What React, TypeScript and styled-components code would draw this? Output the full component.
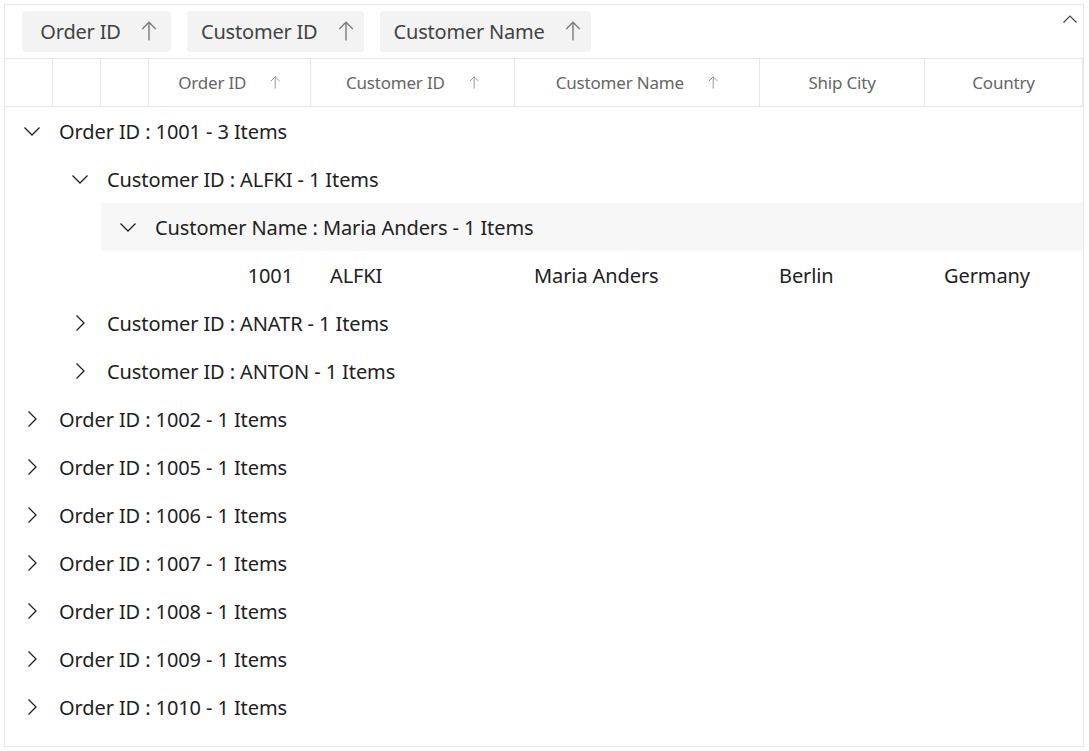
import styled, { createGlobalStyle } from "styled-components";

const GlobalStyle = createGlobalStyle`
  html, body {
    margin: 0;
    padding: 0;
    background: #ffffff;
  }

  body {
    font-family: "Noto Sans", "Open Sans", sans-serif;
    color: #212121;
  }
`;

const COLUMNS = "48px 48px 48px 162px 204px 245px 165px 1fr";

const Page = styled.div`
  padding: 4px;
`;

const Grid = styled.div`
  width: 1080px;
  height: 743px;
  box-sizing: border-box;
  border: 1px solid #e6e6e6;
  overflow: hidden;
  display: flex;
  flex-direction: column;
`;

const GroupDropArea = styled.div`
  position: relative;
  height: 54px;
  box-sizing: border-box;
  display: flex;
  align-items: center;
  gap: 16px;
  padding: 0 17px 1px;
  border-bottom: 1px solid #e6e6e6;
`;

const GroupChip = styled.div`
  height: 41px;
  min-width: 149px;
  box-sizing: border-box;
  display: flex;
  align-items: center;
  justify-content: center;
  gap: 20px;
  padding: 0 10px 0 14px;
  background: #f3f3f3;
  border-radius: 4px;
  font-size: 20px;
  color: #424242;
  letter-spacing: -0.2px;
`;

const ToggleButton = styled.div`
  position: absolute;
  right: 6px;
  top: 10px;
  width: 14px;
  height: 8px;
  display: flex;
`;

const HeaderRow = styled.div`
  display: grid;
  grid-template-columns: ${COLUMNS};
  height: 48px;
  box-sizing: border-box;
  border-bottom: 1px solid #e6e6e6;
`;

const HeaderCell = styled.div`
  display: flex;
  align-items: center;
  justify-content: center;
  gap: 24px;
  border-right: 1px solid #e6e6e6;
  font-size: 17px;
  color: #666666;
  letter-spacing: -0.2px;
`;

const Body = styled.div`
  display: flex;
  flex-direction: column;
`;

const CaptionRow = styled.div<{ $level: number; $shaded?: boolean }>`
  height: 48px;
  margin-left: ${(p) => p.$level * 48}px;
  display: flex;
  align-items: center;
  background: ${(p) => (p.$shaded ? "#f7f7f7" : "transparent")};
  font-size: 20px;
  color: #212121;
  letter-spacing: -0.1px;
`;

const CaretCell = styled.div`
  width: 54px;
  height: 48px;
  flex: none;
  box-sizing: border-box;
  padding-left: 19px;
  display: flex;
  align-items: center;
`;

const DataRow = styled.div`
  display: grid;
  grid-template-columns: ${COLUMNS};
  height: 48px;
`;

const DataCell = styled.div<{ $right?: boolean }>`
  display: flex;
  align-items: center;
  justify-content: ${(p) => (p.$right ? "flex-end" : "flex-start")};
  padding: 0 18px 0 19px;
  font-size: 20px;
  color: #212121;
  letter-spacing: -0.1px;
`;

function SortArrow({ size = 16, color = "#616161" }: { size?: number; color?: string }) {
  return (
    <svg width={size * 0.8} height={size} viewBox="0 0 12.8 16" fill="none">
      <path d="M6.4 15.5V1M1 6.4l5.4-5.4 5.4 5.4" stroke={color} strokeWidth="1.1" />
    </svg>
  );
}

function Chevron({ dir }: { dir: "down" | "right" }) {
  return dir === "down" ? (
    <svg width="16" height="16" viewBox="0 0 16 16" fill="none">
      <path d="M0.5 4.5l7.5 7.5 7.5-7.5" stroke="#212121" strokeWidth="1.3" />
    </svg>
  ) : (
    <svg width="16" height="16" viewBox="0 0 16 16" fill="none">
      <path d="M4.5 0.5l7.5 7.5-7.5 7.5" stroke="#212121" strokeWidth="1.3" />
    </svg>
  );
}

function CollapseIcon() {
  return (
    <svg width="14" height="8" viewBox="0 0 14 8" fill="none">
      <path d="M0.5 7.5l6.5-6.5 6.5 6.5" stroke="#444444" strokeWidth="1.2" />
    </svg>
  );
}

const headers = [
  { title: "Order ID", sorted: true },
  { title: "Customer ID", sorted: true },
  { title: "Customer Name", sorted: true },
  { title: "Ship City", sorted: false },
  { title: "Country", sorted: false },
];

type Caption = { level: number; text: string; open: boolean; shaded?: boolean };

const topCaptions: Caption[] = [
  { level: 0, text: "Order ID : 1001 - 3 Items", open: true },
  { level: 1, text: "Customer ID : ALFKI - 1 Items", open: true },
  { level: 2, text: "Customer Name : Maria Anders - 1 Items", open: true, shaded: true },
];

const restCaptions: Caption[] = [
  { level: 1, text: "Customer ID : ANATR - 1 Items", open: false },
  { level: 1, text: "Customer ID : ANTON - 1 Items", open: false },
  ...["1002", "1005", "1006", "1007", "1008", "1009", "1010"].map((id) => ({
    level: 0,
    text: `Order ID : ${id} - 1 Items`,
    open: false,
  })),
];

function CaptionLine({ caption }: { caption: Caption }) {
  return (
    <CaptionRow $level={caption.level} $shaded={caption.shaded}>
      <CaretCell>
        <Chevron dir={caption.open ? "down" : "right"} />
      </CaretCell>
      {caption.text}
    </CaptionRow>
  );
}

export default function App() {
  return (
    <Page>
      <GlobalStyle />
      <Grid>
        <GroupDropArea>
          {["Order ID", "Customer ID", "Customer Name"].map((name) => (
            <GroupChip key={name}>
              {name}
              <SortArrow size={20} color="#7a7a7a" />
            </GroupChip>
          ))}
          <ToggleButton>
            <CollapseIcon />
          </ToggleButton>
        </GroupDropArea>

        <HeaderRow>
          <HeaderCell />
          <HeaderCell />
          <HeaderCell />
          {headers.map((h) => (
            <HeaderCell key={h.title}>
              {h.title}
              {h.sorted && <SortArrow size={13} color="#8a8a8a" />}
            </HeaderCell>
          ))}
        </HeaderRow>

        <Body>
          {topCaptions.map((c) => (
            <CaptionLine key={c.text} caption={c} />
          ))}
          <DataRow>
            <DataCell />
            <DataCell />
            <DataCell />
            <DataCell $right>1001</DataCell>
            <DataCell>ALFKI</DataCell>
            <DataCell>Maria Anders</DataCell>
            <DataCell>Berlin</DataCell>
            <DataCell>Germany</DataCell>
          </DataRow>
          {restCaptions.map((c) => (
            <CaptionLine key={c.text} caption={c} />
          ))}
        </Body>
      </Grid>
    </Page>
  );
}
